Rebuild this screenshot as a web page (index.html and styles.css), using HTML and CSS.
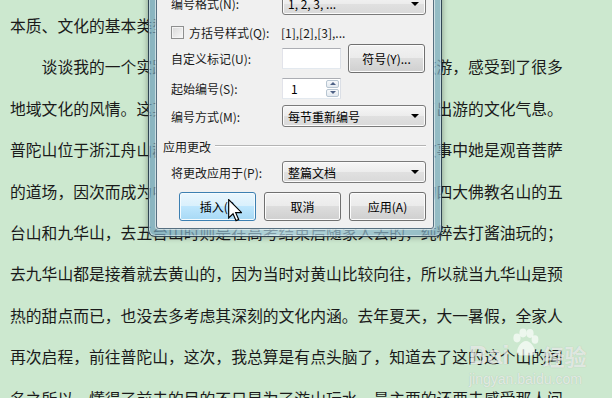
FILE: index.html
```html
<!DOCTYPE html>
<html lang="zh-CN">

<head>
    <meta charset="UTF-8">
    <meta name="viewport" content="width=device-width, initial-scale=1.0">
    <title>脚注和尾注</title>
    <link rel="stylesheet" href="styles.css">
</head>

<body>

    <!-- 文档正文 -->
    <div class="doc">
        <div class="line">本质、文化的基本类型与特征。</div>
        <div class="line indent">谈谈我的一个实践经历吧，大学期间我曾经多次外出去旅游，感受到了很多</div>
        <div class="line">地域文化的风情。这其中令我印象最深的是普陀山，体会到了出游的文化气息。</div>
        <div class="line">普陀山位于浙江舟山群岛，是著名的佛教圣地，相传在佛教故事中她是观音菩萨</div>
        <div class="line">的道场，因次而成为中国的佛教圣地之一，也就是我们所说的四大佛教名山的五</div>
        <div class="line">台山和九华山，去五台山时则是在高考结束后随家人去的，纯粹去打酱油玩的；</div>
        <div class="line">去九华山都是接着就去黄山的，因为当时对黄山比较向往，所以就当九华山是预</div>
        <div class="line">热的甜点而已，也没去多考虑其深刻的文化内涵。去年夏天，大一暑假，全家人</div>
        <div class="line">再次启程，前往普陀山，这次，我总算是有点头脑了，知道去了这的这个山的闻</div>
        <div class="line">名之所以，懂得了前去的目的不只是为了游山玩水，最主要的还要去感受那人间</div>
    </div>

    <!-- 脚注和尾注 对话框 -->
    <div class="win">
        <div class="client">
            <div class="row row-a">
                <span class="label">编号格式(N):</span>
                <div class="combo">1, 2, 3, ...</div>
            </div>
            <div class="row row-b">
                <span class="label check-label"><span class="checkbox"></span>方括号样式(Q):</span>
                <span class="sample">[1],[2],[3],...</span>
            </div>
            <div class="row row-c">
                <span class="label">自定义标记(U):</span>
                <div class="pair">
                    <div class="textbox"></div>
                    <button class="btn btn-sym">符号(Y)...</button>
                </div>
            </div>
            <div class="row row-d">
                <span class="label">起始编号(S):</span>
                <div class="textbox spin">
                    <span class="spin-val">1</span>
                    <span class="spin-btns">
                        <span class="spin-up"></span>
                        <span class="spin-down"></span>
                    </span>
                </div>
            </div>
            <div class="row row-e">
                <span class="label">编号方式(M):</span>
                <div class="combo">每节重新编号</div>
            </div>

            <div class="group-title">
                <span>应用更改</span>
                <span class="group-line"></span>
            </div>

            <div class="row row-f">
                <span class="label">将更改应用于(P):</span>
                <div class="combo">整篇文档</div>
            </div>

            <div class="actions">
                <button class="btn btn-default">插入(I)</button>
                <button class="btn">取消</button>
                <button class="btn">应用(A)</button>
            </div>
        </div>
    </div>

    <!-- 鼠标指针 -->
    <svg class="cursor" width="14" height="23" viewBox="0 0 12 20">
        <path d="M0.5 0.5 V16.5 L4.3 12.8 L6.9 18.8 L9.2 17.8 L6.6 11.9 H11.8 Z" fill="#fff" stroke="#000" stroke-width="1" stroke-linejoin="miter" />
    </svg>

    <!-- 水印 -->
    <div class="watermark">
        <div class="wm-logo">
            <span class="wm-bai">Bai</span>
            <svg class="wm-paw" width="30" height="30" viewBox="0 0 30 30">
                <ellipse cx="7" cy="10" rx="3.6" ry="4.4" />
                <ellipse cx="13" cy="5" rx="3.6" ry="4.4" />
                <ellipse cx="20" cy="5.5" rx="3.6" ry="4.4" />
                <ellipse cx="25" cy="11.5" rx="3.4" ry="4.2" />
                <path d="M16 13 C11 13 7 20 7 24 C7 28 11 28 16 27 C21 28 25 28 25 24 C25 20 21 13 16 13 Z" />
            </svg>
            <span class="wm-jy">经验</span>
        </div>
        <div class="wm-url">jingyan.baidu.com</div>
    </div>

</body>

</html>
```

FILE: styles.css
```css
html,
body {
    height: 398px;
}

body {
    margin: 0;
    background-color: #cce8cf;
    font-family: "Noto Sans CJK SC", "Liberation Sans", sans-serif;
    overflow: hidden;
}

/* 正文 */
.doc {
    height: 398px;
    overflow: hidden;
    padding: 5px 0 0 10px;
    box-sizing: border-box;
    font-size: 15.8px;
    line-height: 41.4px;
    color: #1a1a1a;
}

.line {
    white-space: nowrap;
}

.indent {
    text-indent: 2em;
}

/* 对话框外框 */
.win {
    position: absolute;
    left: 148px;
    top: -20px;
    width: 294px;
    height: 257px;
    box-sizing: border-box;
    padding: 0 7px 7px 7px;
    border: 1px solid rgba(38, 58, 72, 0.9);
    border-top: none;
    border-radius: 0 0 7px 7px;
    background: linear-gradient(90deg, rgba(112, 160, 185, 0.72), rgba(170, 205, 220, 0.72) 45%, rgba(125, 170, 192, 0.72));
    box-shadow: inset 0 0 0 1px rgba(255, 255, 255, 0.45), 0 0 6px rgba(0, 0, 0, 0.35);
}

.client {
    height: 100%;
    box-sizing: border-box;
    padding: 11px 7px 6px 14px;
    background-color: #f0f0f0;
    border: 1px solid #566f80;
    border-radius: 0 0 3px 3px;
    box-shadow: 0 0 0 1px rgba(255, 255, 255, 0.55);
    font-size: 12px;
    color: #1a1a1a;
    display: flex;
    flex-direction: column;
}

.row {
    display: grid;
    grid-template-columns: 111px 1fr;
    align-items: center;
}

.row-a { height: 23px; }
.row-b { height: 14px; margin-top: 9px; }
.row-c { height: 29px; margin-top: 6px; }
.row-d { height: 21px; margin-top: 5px; }
.row-e { height: 22px; margin-top: 6px; }
.row-f { height: 22px; margin-top: 8px; }

.label {
    white-space: nowrap;
}

.check-label {
    display: flex;
    align-items: center;
    gap: 5px;
}

.checkbox {
    width: 11px;
    height: 11px;
    border: 1px solid #8e8f8f;
    background: linear-gradient(135deg, #d8d8d8, #f8f8f8);
    box-shadow: inset 0 0 0 1px #f4f4f4;
}

.sample {
    margin-left: -1px;
}

/* 下拉框 */
.combo {
    position: relative;
    height: 100%;
    box-sizing: border-box;
    padding-left: 5px;
    display: flex;
    align-items: center;
    border: 1px solid #7a7a7a;
    border-radius: 3px;
    background: linear-gradient(#f6f6f6 0%, #ececec 50%, #e0e0e0 51%, #d9d9d9 100%);
    box-shadow: inset 0 0 0 1px #fbfbfb;
    color: #000;
}

.combo::after {
    content: "";
    position: absolute;
    right: 6px;
    top: 50%;
    margin-top: -2px;
    border-left: 4px solid transparent;
    border-right: 4px solid transparent;
    border-top: 4px solid #000;
}

/* 输入框 */
.pair {
    display: flex;
    align-items: center;
    gap: 7px;
    height: 100%;
}

.textbox {
    width: 59px;
    height: 21px;
    box-sizing: border-box;
    background: #fff;
    border: 1px solid #abadb3;
    border-color: #abadb3 #dbdfe6 #e3e9ef #e2e3ea;
}

.spin {
    position: relative;
    height: 21px;
    display: flex;
    align-items: center;
    padding-left: 8px;
    color: #000;
}

.spin-btns {
    position: absolute;
    right: 1px;
    top: 1px;
    bottom: 1px;
    width: 13px;
    display: flex;
    flex-direction: column;
    gap: 1px;
}

.spin-up,
.spin-down {
    flex: 1;
    position: relative;
    border: 1px solid #b8c6d2;
    border-radius: 2px;
    background: linear-gradient(#f7f9fb, #e3e9ef);
}

.spin-up::after,
.spin-down::after {
    content: "";
    position: absolute;
    left: 50%;
    top: 50%;
    margin: -2px 0 0 -3px;
    border-left: 3px solid transparent;
    border-right: 3px solid transparent;
}

.spin-up::after {
    border-bottom: 3px solid #4d6185;
}

.spin-down::after {
    border-top: 3px solid #4d6185;
}

/* 按钮 */
.btn {
    width: 77px;
    height: 29px;
    padding: 0;
    font-family: inherit;
    font-size: 12px;
    color: #000;
    border: 1px solid #707070;
    border-radius: 3px;
    background: linear-gradient(#f2f2f2 0%, #ebebeb 49%, #dddddd 50%, #cfcfcf 100%);
    box-shadow: inset 0 0 0 1px #fcfcfc;
}

.btn-sym {
    height: 29px;
}

.btn-default {
    border-color: #3c7fb1;
    background: linear-gradient(#eaf6fd 0%, #d9f0fc 49%, #bee6fd 50%, #a7d9f5 100%);
    box-shadow: inset 0 0 0 1px #f4fbfe;
}

/* 分组标题 */
.group-title {
    height: 14px;
    margin: 12px 0 0 -8px;
    display: flex;
    align-items: center;
    white-space: nowrap;
}

.group-line {
    flex: 1;
    margin-left: 4px;
    height: 0;
    border-top: 1px solid #b4b4b4;
    border-bottom: 1px solid #fff;
}

.actions {
    margin-top: 9px;
    display: flex;
    justify-content: flex-end;
    gap: 8px;
}

/* 鼠标指针 */
.cursor {
    position: absolute;
    left: 228px;
    top: 199px;
}

/* 水印 */
.watermark {
    position: absolute;
    left: 469px;
    top: 322px;
    color: rgba(255, 255, 255, 0.65);
    text-shadow: 0 0 1px rgba(90, 90, 90, 0.3);
}

.wm-logo {
    display: flex;
    align-items: flex-end;
    height: 48px;
}

.wm-bai {
    font-family: "Liberation Sans", sans-serif;
    font-weight: bold;
    font-size: 26px;
    line-height: 30px;
}

.wm-paw {
    fill: rgba(255, 255, 255, 0.65);
    margin: 0 2px 12px 1px;
}

.wm-jy {
    font-size: 22px;
    line-height: 30px;
    font-weight: bold;
}

.wm-url {
    font-family: "Liberation Sans", sans-serif;
    font-size: 14px;
    line-height: 16px;
    margin-top: 1px;
}
```
